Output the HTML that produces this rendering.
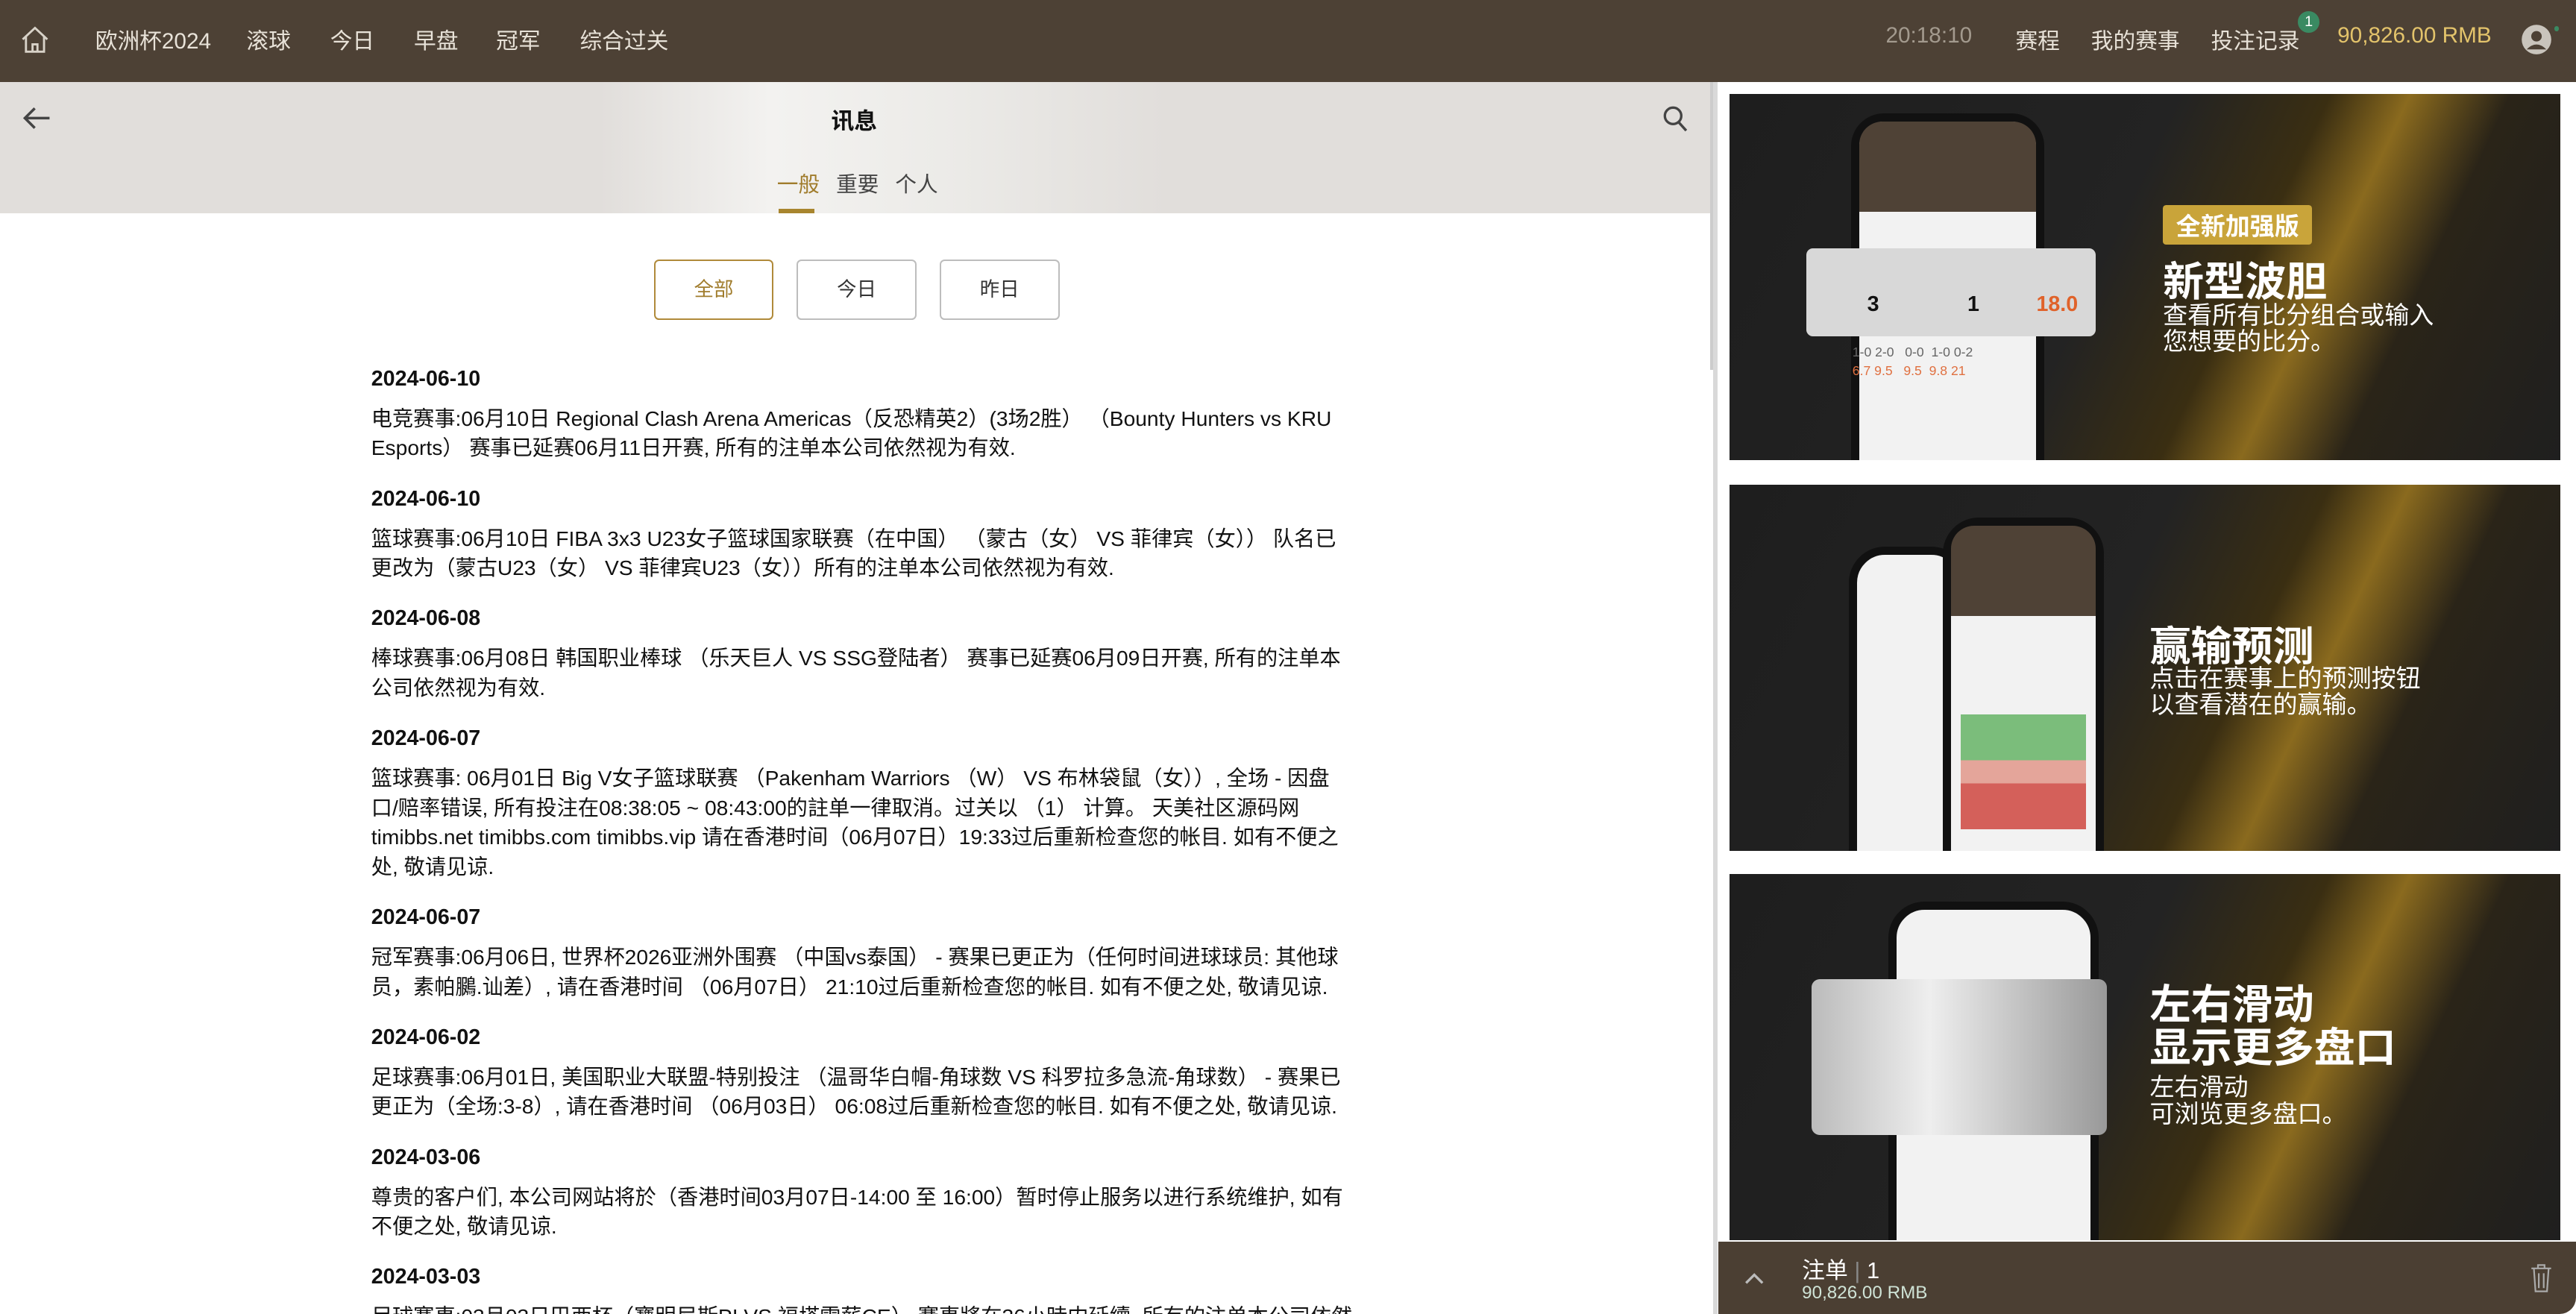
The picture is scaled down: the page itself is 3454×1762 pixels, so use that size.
<!DOCTYPE html>
<html><head><meta charset="utf-8">
<style>
html,body{margin:0;padding:0;overflow:hidden;background:#fff}
#root{width:1568px;height:800px;zoom:2.2025;position:relative;overflow:hidden;font-family:"Liberation Sans","Noto Sans CJK SC",sans-serif}
.top{position:absolute;left:0;top:0;width:1568px;height:50px;background:#4d4135;color:#e8e2d8;font-size:13.5px}
.top span{position:absolute;top:14px}
.left{position:absolute;left:0;top:50px;width:1043px;height:750px;background:#fff;overflow:hidden}
.hdr{position:absolute;left:0;top:0;width:1043px;height:80px;background:linear-gradient(90deg,#e1dedb 0%,#e1dedb 35%,#f3f2f0 45%,#ecebe8 55%,#e1dedb 68%,#e1dedb 100%)}
.btn{position:absolute;top:108px;width:73px;height:37px;border:1px solid #bdbdbd;border-radius:3px;box-sizing:border-box;text-align:center;line-height:35px;font-size:12px;color:#333}
.content{position:absolute;left:226px;top:172px;width:598px;height:578px;overflow:hidden;font-size:12.8px;line-height:18px;color:#111}
.content b{display:block;margin:0 0 6px;font-size:13px}
.content p{margin:0 0 13px}
.right{position:absolute;left:1043px;top:50px;width:525px;height:750px;background:#fff;border-left:3px solid #d9d9d9;box-sizing:border-box;overflow:hidden}
.ban{position:absolute;left:7px;width:506px;height:223px;background:linear-gradient(115deg,#1e1e1e 0%,#232323 45%,#3a2e12 60%,#8a6a1e 68%,#2a2418 78%,#1f1f1f 100%);overflow:hidden;color:#fff}
.phone{position:absolute;background:#f2f2f2;border:5px solid #111;border-radius:22px}
.ttl{position:absolute;font-weight:bold;font-size:25px}
.sub{position:absolute;font-size:15px;line-height:16px}
.bot{position:absolute;left:1046px;top:756px;width:522px;height:44px;background:#4b3f33;color:#fff;border-bottom-right-radius:10px}
</style></head><body><div id="root">
<div class="top">
<svg style="position:absolute;left:12px;top:15px" width="19" height="18" viewBox="0 0 19 18"><path d="M2 9 L9.5 2 L17 9 M4 7.5 V16.5 H15 V7.5 M8 16.5 V12 H11 V16.5" fill="none" stroke="#d8d2c8" stroke-width="1.3"/></svg>
<span style="left:58px">欧洲杯2024</span><span style="left:150px">滚球</span><span style="left:201px">今日</span><span style="left:252px">早盘</span><span style="left:302px">冠军</span><span style="left:353px">综合过关</span>
<span style="left:1148px;color:#a39a8e">20:18:10</span><span style="left:1227px">赛程</span><span style="left:1273px">我的赛事</span><span style="left:1346px">投注记录</span>
<div style="position:absolute;left:1399px;top:7px;width:13px;height:13px;border-radius:50%;background:#3a8a62;color:#fff;font-size:9px;text-align:center;line-height:13px">1</div>
<span style="left:1423px;color:#e3c36b">90,826.00 RMB</span>
<svg style="position:absolute;left:1534px;top:14px" width="20" height="20" viewBox="0 0 20 20"><circle cx="10" cy="10" r="9" fill="#c9c4bc"/><circle cx="10" cy="8" r="3.2" fill="#4d4135"/><path d="M4 16 Q10 10 16 16" fill="#4d4135"/></svg>
<div style="position:absolute;left:1555px;top:16px;width:3px;height:3px;border-radius:50%;background:#3a8a62"></div>
</div>
<div class="left">
<div class="hdr">
<svg style="position:absolute;left:13px;top:15px" width="18" height="14" viewBox="0 0 18 14"><path d="M17 7 H2 M8 1 L2 7 L8 13" fill="none" stroke="#444" stroke-width="1.6"/></svg>
<div style="position:absolute;left:506px;top:12px;font-size:14px;font-weight:bold;color:#111">讯息</div>
<svg style="position:absolute;left:1012px;top:14px" width="16" height="17" viewBox="0 0 16 17"><circle cx="6.5" cy="6.5" r="5" fill="none" stroke="#444" stroke-width="1.5"/><path d="M10 10.5 L14.5 15.5" stroke="#444" stroke-width="1.6"/></svg>
<div style="position:absolute;left:473px;top:52px;font-size:13px;color:#a07c2c">一般</div>
<div style="position:absolute;left:509px;top:52px;font-size:13px;color:#444">重要</div>
<div style="position:absolute;left:545px;top:52px;font-size:13px;color:#444">个人</div>
<div style="position:absolute;left:474px;top:77px;width:22px;height:3px;background:#a8852e"></div>
</div>
<div class="btn" style="left:398px;border-color:#b08a3a;color:#a07c2c">全部</div>
<div class="btn" style="left:485px">今日</div>
<div class="btn" style="left:572px">昨日</div>
<div class="content">
<b>2024-06-10</b><p>电竞赛事:06月10日 Regional Clash Arena Americas（反恐精英2）(3场2胜） （Bounty Hunters vs KRU Esports） 赛事已延赛06月11日开赛, 所有的注单本公司依然视为有效.</p>
<b>2024-06-10</b><p>篮球赛事:06月10日 FIBA 3x3 U23女子篮球国家联赛（在中国） （蒙古（女） VS 菲律宾（女）） 队名已更改为（蒙古U23（女） VS 菲律宾U23（女））所有的注单本公司依然视为有效.</p>
<b>2024-06-08</b><p>棒球赛事:06月08日 韩国职业棒球 （乐天巨人 VS SSG登陆者） 赛事已延赛06月09日开赛, 所有的注单本公司依然视为有效.</p>
<b>2024-06-07</b><p>篮球赛事: 06月01日 Big V女子篮球联赛 （Pakenham Warriors （W） VS 布林袋鼠（女））, 全场 - 因盘口/赔率错误, 所有投注在08:38:05 ~ 08:43:00的註单一律取消。过关以 （1） 计算。 天美社区源码网 timibbs.net timibbs.com timibbs.vip 请在香港时间（06月07日）19:33过后重新检查您的帐目. 如有不便之处, 敬请见谅.</p>
<b>2024-06-07</b><p>冠军赛事:06月06日, 世界杯2026亚洲外围赛 （中国vs泰国） - 赛果已更正为（任何时间进球球员: 其他球员，素帕鵩.讪差）, 请在香港时间 （06月07日） 21:10过后重新检查您的帐目. 如有不便之处, 敬请见谅.</p>
<b>2024-06-02</b><p>足球赛事:06月01日, 美国职业大联盟-特别投注 （温哥华白帽-角球数 VS 科罗拉多急流-角球数） - 赛果已更正为（全场:3-8）, 请在香港时间 （06月03日） 06:08过后重新检查您的帐目. 如有不便之处, 敬请见谅.</p>
<b>2024-03-06</b><p>尊贵的客户们, 本公司网站将於（香港时间03月07日-14:00 至 16:00）暂时停止服务以进行系统维护, 如有不便之处, 敬请见谅.</p>
<b>2024-03-03</b><p>足球赛事:03月03日巴西杯（寶明尼斯PI VS 福塔雷薪CE） 賽事將在36小時内延續, 所有的注单本公司依然视为有效.</p>
</div>
<div style="position:absolute;left:1041px;top:0;width:2px;height:175px;background:#ccc"></div>
</div>
<div class="right">
<div class="ban" style="top:7px">
<div class="phone" style="left:74px;top:12px;width:108px;height:240px;border-radius:20px"><div style="height:55px;background:#4f4236;border-radius:14px 14px 0 0"></div></div>
<div style="position:absolute;left:47px;top:94px;width:176px;height:54px;background:#d8d8d8;border-radius:4px;color:#111;font-size:13px;font-weight:bold"><span style="position:absolute;left:37px;top:27px">3</span><span style="position:absolute;left:98px;top:27px">1</span><span style="position:absolute;left:140px;top:27px;color:#e0622a">18.0</span></div>
<div style="position:absolute;left:75px;top:152px;font-size:8px;line-height:11px;color:#666">1-0 2-0 &nbsp; 0-0 &nbsp;1-0 0-2<br><span style="color:#e07040">6.7 9.5 &nbsp; 9.5 &nbsp;9.8 21</span></div>
<div style="position:absolute;left:264px;top:68px;background:#c9a43a;color:#fff;font-weight:bold;font-size:15px;padding:1px 8px;border-radius:2px">全新加强版</div>
<div class="ttl" style="left:264px;top:94px">新型波胆</div>
<div class="sub" style="left:264px;top:127px">查看所有比分组合或输入<br>您想要的比分。</div>
</div>
<div class="ban" style="top:245px">
<div class="phone" style="left:73px;top:38px;width:62px;height:220px"></div>
<div class="phone" style="left:130px;top:20px;width:88px;height:230px"><div style="height:55px;background:#4f4236;border-radius:14px 14px 0 0"></div><div style="margin:60px 6px 0;height:70px;background:linear-gradient(#7bbd7b 0 40%,#e4a59a 40% 60%,#d4605a 60%)"></div></div>
<div class="ttl" style="left:256px;top:78px">赢输预测</div>
<div class="sub" style="left:256px;top:110px">点击在赛事上的预测按钮<br>以查看潜在的赢输。</div>
</div>
<div class="ban" style="top:482px">
<div class="phone" style="left:97px;top:17px;width:118px;height:240px"></div>
<div style="position:absolute;left:50px;top:64px;width:180px;height:95px;background:linear-gradient(90deg,#bbb,#eee 40%,#999);border-radius:5px"></div>
<div class="ttl" style="left:256px;top:67px;line-height:26px">左右滑动<br>显示更多盘口</div>
<div class="sub" style="left:256px;top:122px">左右滑动<br>可浏览更多盘口。</div>
</div>
</div>
<div class="bot">
<svg style="position:absolute;left:16px;top:18px" width="12" height="8" viewBox="0 0 12 8"><path d="M1 7 L6 2 L11 7" fill="none" stroke="#bbb" stroke-width="1.5"/></svg>
<div style="position:absolute;left:51px;top:6px;font-size:14px">注单 <span style="color:#888">|</span> 1</div>
<div style="position:absolute;left:51px;top:25px;font-size:11px;color:#cfe3d6">90,826.00 RMB</div>
<svg style="position:absolute;left:494px;top:12px" width="14" height="19" viewBox="0 0 14 19"><path d="M1 4 H13 M5 4 V2 H9 V4 M2.5 4 L3.5 18 H10.5 L11.5 4 M5.5 7 V16 M8.5 7 V16" fill="none" stroke="#aaa" stroke-width="1"/></svg>
</div>
</div></body></html>
